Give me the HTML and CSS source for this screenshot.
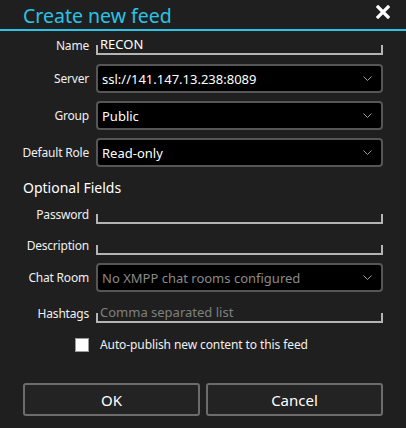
FILE: index.html
```html
<!DOCTYPE html>
<html>
<head>
<meta charset="utf-8">
<link rel="stylesheet" href="styles.css">
</head>
<body>
<div class="dialog">
  <header class="header">
    <h1 class="title">Create new feed</h1>
    <svg class="close" width="14" height="14" viewBox="0 0 14 14"><path d="M2 2 L12 12 M12 2 L2 12" stroke="#fff" stroke-width="3.2" stroke-linecap="square"/></svg>
  </header>
  <div class="form">
    <div class="row row-name">
      <span class="label">Name</span>
      <div class="tf"><span class="tf-text">RECON</span></div>
    </div>
    <div class="row row-server">
      <span class="label">Server</span>
      <div class="combo"><span class="combo-text">ssl://141.147.13.238:8089</span><svg class="chev" width="9" height="5" viewBox="0 0 9 5"><path d="M0.5 0.5 L4.5 4.5 L8.5 0.5" fill="none" stroke="#a0a0a0" stroke-width="1"/></svg></div>
    </div>
    <div class="row row-combo">
      <span class="label">Group</span>
      <div class="combo"><span class="combo-text">Public</span><svg class="chev" width="9" height="5" viewBox="0 0 9 5"><path d="M0.5 0.5 L4.5 4.5 L8.5 0.5" fill="none" stroke="#a0a0a0" stroke-width="1"/></svg></div>
    </div>
    <div class="row row-combo">
      <span class="label">Default Role</span>
      <div class="combo"><span class="combo-text">Read-only</span><svg class="chev" width="9" height="5" viewBox="0 0 9 5"><path d="M0.5 0.5 L4.5 4.5 L8.5 0.5" fill="none" stroke="#a0a0a0" stroke-width="1"/></svg></div>
    </div>
    <div class="section">Optional Fields</div>
    <div class="row row-pass">
      <span class="label">Password</span>
      <div class="tf"><span class="tf-text"></span></div>
    </div>
    <div class="row row-desc">
      <span class="label">Description</span>
      <div class="tf"><span class="tf-text"></span></div>
    </div>
    <div class="row row-chat">
      <span class="label">Chat Room</span>
      <div class="combo"><span class="combo-text muted">No XMPP chat rooms configured</span><svg class="chev" width="9" height="5" viewBox="0 0 9 5"><path d="M0.5 0.5 L4.5 4.5 L8.5 0.5" fill="none" stroke="#a0a0a0" stroke-width="1"/></svg></div>
    </div>
    <div class="row row-tags">
      <span class="label">Hashtags</span>
      <div class="tf"><span class="tf-text placeholder">Comma separated list</span></div>
    </div>
    <div class="check-row">
      <span class="checkbox"></span>
      <span class="check-label">Auto-publish new content to this feed</span>
    </div>
    <div class="buttons">
      <button class="btn">OK</button>
      <button class="btn">Cancel</button>
    </div>
  </div>
</div>
</body>
</html>
```
FILE: styles.css
```css
html, body {
  margin: 0;
  padding: 0;
  background: #1f1f1f;
}
body {
  font-family: "Noto Sans", "Open Sans", sans-serif;
  color: #fff;
  width: 406px;
  height: 428px;
  overflow: hidden;
}
.dialog {
  display: flex;
  flex-direction: column;
}
.header {
  height: 29px;
  border-bottom: 2px solid #29c3e8;
  display: flex;
  align-items: flex-start;
  justify-content: space-between;
  padding: 0 16px 0 23px;
}
.title {
  margin: 0;
  font-weight: 400;
  font-size: 19.5px;
  line-height: 29px;
  color: #29c3e8;
  margin-top: 1px;
}
.close {
  margin-top: 5px;
}
.form {
  padding: 0 23px 0 0;
  display: flex;
  flex-direction: column;
}
.row {
  display: grid;
  grid-template-columns: 89px 287px;
  column-gap: 7px;
  align-items: center;
}
.label {
  text-align: right;
  font-size: 12px;
  letter-spacing: -0.2px;
  white-space: nowrap;
  color: #f0f0f0;
}
.tf {
  height: 17px;
  border-bottom: 2px solid #b4b4b4;
  background:
    linear-gradient(#b4b4b4, #b4b4b4) left bottom / 2px 8px no-repeat,
    linear-gradient(#b4b4b4, #b4b4b4) right bottom / 2px 8px no-repeat;
  display: flex;
  align-items: flex-end;
  padding-left: 4px;
}
.tf-text {
  font-size: 13px;
  line-height: 17px;
  color: #fff;
}
.tf-text.placeholder {
  color: #808080;
}
.row-name { margin-top: 5px; }
.row-server { margin-top: 9px; }
.row-combo { margin-top: 8px; }
.combo {
  height: 25px;
  border: 2px solid #565656;
  border-radius: 4px;
  background: #000;
  display: flex;
  align-items: center;
  justify-content: space-between;
  padding: 0 9px 0 4px;
}
.combo-text {
  font-size: 13px;
  color: #fff;
}
.combo-text.muted {
  color: #8a8a8a;
}
.section {
  font-size: 14px;
  margin-top: 11px;
  margin-left: 23px;
  line-height: 20px;
}
.row-pass { margin-top: 7px; }
.row-desc { margin-top: 12px; }
.row-chat { margin-top: 8px; }
.row-tags { margin-top: 12px; }
.check-row {
  display: flex;
  align-items: center;
  margin-top: 13px;
  padding-left: 75px;
  gap: 11px;
}
.checkbox {
  width: 12px;
  height: 12px;
  background: #fff;
  border: 1px solid #9a9a9a;
}
.check-label {
  font-size: 12px;
  letter-spacing: -0.1px;
  color: #f0f0f0;
}
.buttons {
  display: grid;
  grid-template-columns: 1fr 1fr;
  column-gap: 6px;
  margin-top: 30px;
  margin-left: 23px;
}
.btn {
  height: 33px;
  background: #232323;
  border: 2px solid #6c6c6c;
  border-radius: 3px;
  color: #fff;
  font-family: "Noto Sans", "Open Sans", sans-serif;
  font-size: 15px;
  padding: 0;
}
```
